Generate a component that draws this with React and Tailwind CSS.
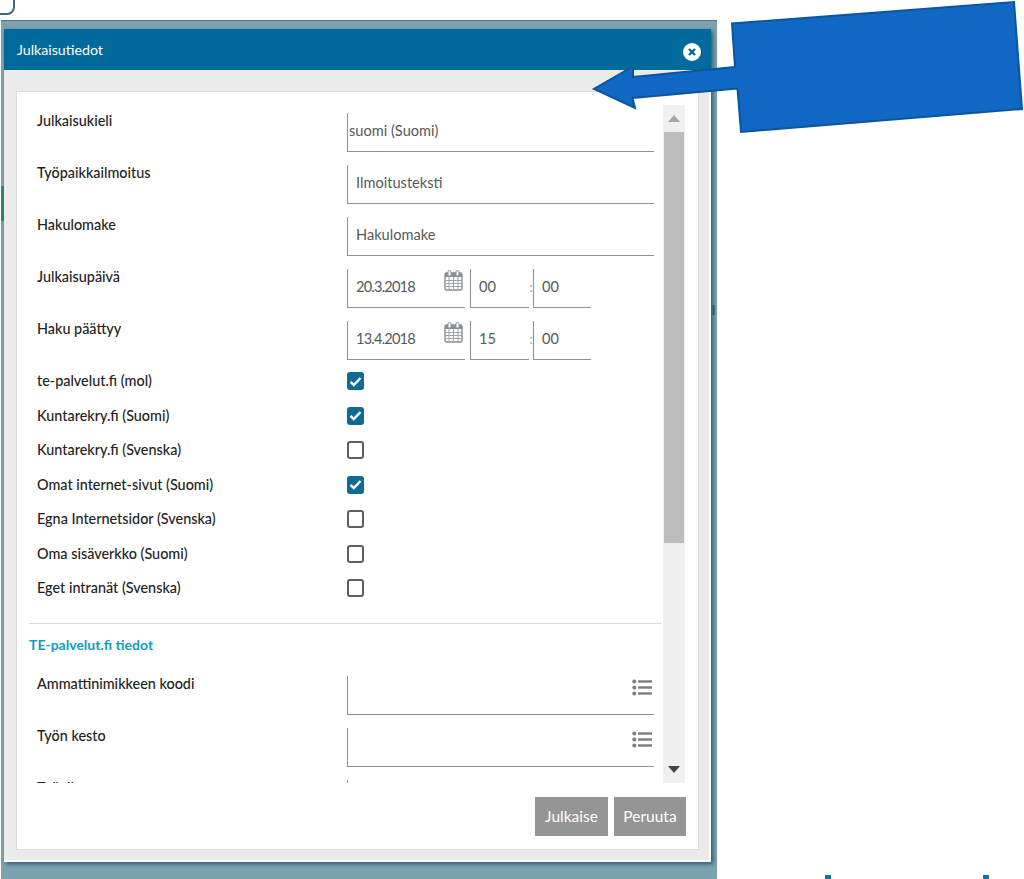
import React from "react";

function Calendar() {
  return (
    <svg width="19" height="21" viewBox="0 0 19 21" className="absolute right-[2px] top-[1px]">
      <rect x="1" y="3" width="17" height="17" rx="1.5" fill="#fff" stroke="#8a8f93" strokeWidth="1.4" />
      <rect x="1" y="3" width="17" height="4" fill="#8a8f93" />
      <path d="M1 10.5H18M1 13.5H18M1 16.5H18M5 7V20M9.5 7V20M14 7V20" stroke="#a0a4a8" strokeWidth="1" />
      <rect x="4" y="0.5" width="3" height="5.5" rx="1.5" fill="#fff" stroke="#8a8f93" />
      <rect x="12" y="0.5" width="3" height="5.5" rx="1.5" fill="#fff" stroke="#8a8f93" />
    </svg>
  );
}

function ListIcon() {
  return (
    <svg width="20" height="17" viewBox="0 0 20 17" className="absolute right-[2px] top-[3px]">
      <g fill="#7a7f83">
        <circle cx="2.3" cy="2.5" r="2" />
        <circle cx="2.3" cy="8.5" r="2" />
        <circle cx="2.3" cy="14.5" r="2" />
        <rect x="6" y="1.3" width="14" height="2.4" />
        <rect x="6" y="7.3" width="14" height="2.4" />
        <rect x="6" y="13.3" width="14" height="2.4" />
      </g>
    </svg>
  );
}

function Field({ className = "", children }) {
  return (
    <div className={`relative h-[39px] border-l border-b border-[#8b9094] text-[#55595c] text-[14.6px] leading-[36px] ${className}`}>
      {children}
    </div>
  );
}

function Row({ label, children }) {
  return (
    <div className="flex h-[52px] items-start">
      <div className="w-[318px] pl-[8px] leading-[16px] text-[14.4px] text-[#222] font-medium shrink-0">{label}</div>
      <div className="flex">{children}</div>
    </div>
  );
}

function Check({ label, checked }) {
  return (
    <div className="flex h-[34.5px] items-center">
      <div className="w-[318px] pl-[8px] text-[14.4px] leading-[16px] text-[#222] font-medium shrink-0">{label}</div>
      {checked ? (
        <div className="w-[17px] h-[18px] rounded-[3px] bg-[#0f6a96] flex items-center justify-center">
          <svg width="13" height="11" viewBox="0 0 13 11"><path d="M1.5 5.8L4.8 9L11.5 2" fill="none" stroke="#fff" strokeWidth="2.4" /></svg>
        </div>
      ) : (
        <div className="w-[17px] h-[18px] rounded-[3px] border-2 border-[#5b6064] bg-white" />
      )}
    </div>
  );
}

function DateRow({ label, date, hour }) {
  return (
    <Row label={label}>
      <Field className="w-[118px] pl-[8px] tracking-[-0.8px]">{date}<Calendar /></Field>
      <Field className="w-[59px] ml-[5px] pl-[8px]">{hour}</Field>
      <div className="w-[4px] text-center text-[#9a9a9a] text-[13px] leading-[37px]">:</div>
      <Field className="w-[58px] pl-[8px]">00</Field>
    </Row>
  );
}

export default function App() {
  return (
    <div className="relative w-[1024px] h-[879px] overflow-hidden bg-white" style={{ fontFamily: "Lato, 'Noto Sans', sans-serif" }}>
      <div className="absolute left-[-20px] top-[-20px] w-[35px] h-[35px] rounded-[8px] border-2 border-[#3f6380]" />

      <div className="relative ml-[1px] mt-[20px] w-[716px] h-[859px] bg-[#7ca2b0] border-t border-[#4f7486] pt-[8px] pl-[3px] overflow-hidden">
        <div className="absolute left-0 top-[165px] w-[3px] h-[35px] bg-[#2a8a70]" />
        <div className="absolute right-0 top-[279px] text-[14px] leading-[20px] text-[#444] w-[5px] overflow-hidden">l</div>

        <div className="relative w-[707px] h-[833px] bg-[#ebebeb] shadow-[2px_2px_4px_rgba(0,40,70,0.6)]">
          <div className="flex items-center justify-between h-[41px] bg-[#006a9b] pl-[13px] pr-[10px]">
            <span className="text-white text-[14.2px]">Julkaisutiedot</span>
            <svg width="18" height="18" viewBox="0 0 18 18" className="mt-[4px]">
              <circle cx="9" cy="9" r="9" fill="#fff" />
              <path d="M6 6L12 12M12 6L6 12" stroke="#006a9b" strokeWidth="2.4" />
            </svg>
          </div>

          <div className="h-[792px] pl-[12px] pt-[21px] border-r-2 border-b-2 border-white">
            <div className="w-[683px] h-[759px] bg-white border border-[#dedede]">
              <div className="flex h-[678px] mt-[13px] overflow-hidden">
                <div className="w-[634px] ml-[12px] shrink-0 overflow-hidden">
                  <div className="pt-[8px]">
                    <Row label="Julkaisukieli"><Field className="w-[307px] pl-[1px]">suomi (Suomi)</Field></Row>
                    <Row label="Työpaikkailmoitus"><Field className="w-[307px] pl-[8px]">Ilmoitusteksti</Field></Row>
                    <Row label="Hakulomake"><Field className="w-[307px] pl-[8px]">Hakulomake</Field></Row>
                    <DateRow label="Julkaisupäivä" date="20.3.2018" hour="00" />
                    <DateRow label="Haku päättyy" date="13.4.2018" hour="15" />
                    <div className="-mt-[9px]">
                      <Check label="te-palvelut.fi (mol)" checked />
                      <Check label="Kuntarekry.fi (Suomi)" checked />
                      <Check label="Kuntarekry.fi (Svenska)" />
                      <Check label="Omat internet-sivut (Suomi)" checked />
                      <Check label="Egna Internetsidor (Svenska)" />
                      <Check label="Oma sisäverkko (Suomi)" />
                      <Check label="Eget intranät (Svenska)" />
                    </div>
                    <div className="mt-[17px] border-t border-[#dcdcdc] w-[633px]" />
                    <div className="mt-[11px] h-[20px] leading-[20px] text-[14px] font-bold text-[#119cc4]">TE-palvelut.fi tiedot</div>
                    <div className="mt-[21px]">
                      <Row label="Ammattinimikkeen koodi"><Field className="w-[307px]"><ListIcon /></Field></Row>
                      <Row label="Työn kesto"><Field className="w-[307px]"><ListIcon /></Field></Row>
                      <Row label="Työaika"><Field className="w-[307px]"><ListIcon /></Field></Row>
                    </div>
                  </div>
                </div>
                <div className="w-[22px] bg-[#f0f0f0] flex flex-col items-center">
                  <div className="h-[27px] flex items-center justify-center">
                    <svg width="12" height="7" viewBox="0 0 12 7"><path d="M6 0L12 7H0Z" fill="#a8a8a8" /></svg>
                  </div>
                  <div className="w-[20px] h-[411px] bg-[#bdbdbd]" />
                  <div className="flex-1" />
                  <div className="h-[27px] flex items-center justify-center">
                    <svg width="12" height="7" viewBox="0 0 12 7"><path d="M0 0H12L6 7Z" fill="#444" /></svg>
                  </div>
                </div>
              </div>
              <div className="flex justify-end gap-[6px] mt-[14px] pr-[12px]">
                <div className="w-[73px] h-[39px] bg-[#959595] text-white text-[15.5px] leading-[39px] text-center">Julkaise</div>
                <div className="w-[72px] h-[39px] bg-[#959595] text-white text-[15.5px] leading-[39px] text-center">Peruuta</div>
              </div>
            </div>
          </div>
        </div>
      </div>

      <svg className="absolute left-0 top-0 pointer-events-none" width="1024" height="879" viewBox="0 0 1024 879">
        <path d="M732 23.5L1014 2L1022 109L741 132L737.5 88.5L632.5 98L635 108L594 89L633 66.5L633 77L735 67Z" fill="#1168c4" stroke="#0a559e" strokeWidth="2" />
        <rect x="825" y="875" width="6" height="4" fill="#1c6f98" />
        <rect x="983" y="875" width="6" height="4" fill="#1c6f98" />
      </svg>
    </div>
  );
}
